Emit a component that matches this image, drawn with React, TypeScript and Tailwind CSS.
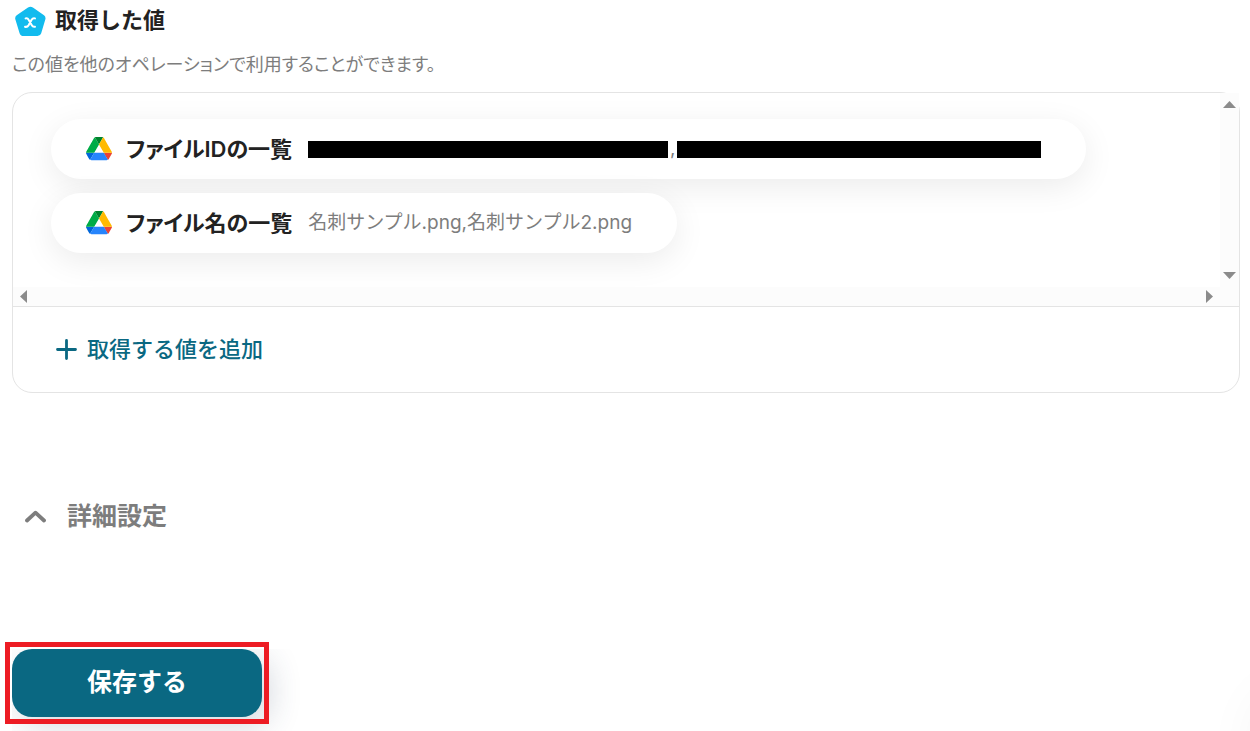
import type { ReactNode } from 'react'

const DriveIcon = () => (
  <svg viewBox="0 0 87.3 78" className="w-[26px] shrink-0" aria-hidden="true">
    <path d="m6.6 66.85 3.85 6.65c.8 1.4 1.95 2.5 3.3 3.3l13.75-23.8h-27.5c0 1.55.4 3.1 1.2 4.5z" fill="#0066da" />
    <path d="m43.65 25-13.75-23.8c-1.35.8-2.5 1.9-3.3 3.3l-25.4 44a9.06 9.06 0 0 0-1.2 4.5h27.5z" fill="#00ac47" />
    <path d="m73.55 76.8c1.35-.8 2.5-1.9 3.3-3.3l1.6-2.75 7.65-13.25c.8-1.4 1.2-2.95 1.2-4.5h-27.502l5.852 11.5z" fill="#ea4335" />
    <path d="m43.65 25 13.75-23.8c-1.35-.8-2.9-1.2-4.5-1.2h-18.5c-1.6 0-3.15.45-4.5 1.2z" fill="#00832d" />
    <path d="m59.8 53h-32.3l-13.75 23.8c1.35.8 2.9 1.2 4.5 1.2h50.8c1.6 0 3.15-.45 4.5-1.2z" fill="#2684fc" />
    <path d="m73.4 26.5-12.7-22c-.8-1.4-1.95-2.5-3.3-3.3l-13.75 23.8 16.15 28h27.45c0-1.55-.4-3.1-1.2-4.5z" fill="#ffba00" />
  </svg>
)

const ValueIcon = () => (
  <svg viewBox="0 0 32 32" className="size-8 shrink-0" aria-hidden="true">
    <path
      d="M13 3.6 Q15.4 1.9 17.9 3.6 L29 11.3 Q31.1 12.9 30.3 15.5 L26.2 29.2 Q25.3 32 22.5 32 H8.3 Q5.5 32 4.6 29.2 L.4 15.5 Q-.4 12.9 1.7 11.3 Z"
      fill="#12bbee"
    />
    <path
      d="M10.6 14.4 Q12.6 13.8 13.6 15.7 L16.8 21.3 Q17.9 23.3 20 22.7 M20 14.4 Q17.8 13.8 16.6 15.8 L13.7 21.1 Q12.2 23.4 10 22.7"
      fill="none"
      stroke="#fff"
      strokeWidth="2"
      strokeLinecap="round"
    />
  </svg>
)

const ValueChip = ({ label, children }: { label: string; children: ReactNode }) => (
  <li className="flex h-[60px] items-center whitespace-nowrap rounded-full bg-white pr-[45px] pl-[35px] shadow-[0_8px_32px_rgba(0,0,0,0.08)]">
    <DriveIcon />
    <span className="ml-[14px] text-[22px] leading-8 font-semibold text-[#222] [font-feature-settings:'palt']">{label}</span>
    <span className="ml-4 flex items-center text-[19px] leading-7 text-[#7d7d7d]">{children}</span>
  </li>
)

const ScrollArrow = ({ label, points, className }: { label: string; points: string; className: string }) => (
  <button type="button" aria-label={label} className="block">
    <svg viewBox="0 0 14 14" className={className} preserveAspectRatio="none" aria-hidden="true">
      <polygon points={points} fill="#8b8b8b" />
    </svg>
  </button>
)

const App = () => {
  return (
    <main className="relative min-h-screen overflow-hidden bg-white pr-[10px] pl-3 font-['Inter','Noto_Sans_CJK_JP',sans-serif]">
      <header className="pt-1">
        <div className="flex items-center gap-2 pl-[3px]">
          <ValueIcon />
          <h1 className="text-[22px] leading-8 font-semibold text-[#222]">取得した値</h1>
        </div>
        <p className="mt-[17px] text-[18px] leading-6 text-[#7d7d7d] [font-feature-settings:'palt']">
          この値を他のオペレーションで利用することができます。
        </p>
      </header>

      <section className="mt-[15px] rounded-[20px] border border-[#e4e4e4]">
        <div className="border-b border-[#e4e4e4]">
          <div className="flex">
            <ul className="flex min-w-0 flex-1 flex-col items-start gap-[14px] overflow-hidden rounded-tl-[20px] pt-[26px] pb-[34px] pl-[38px]">
              <ValueChip label="ファイルIDの一覧">
                <span className="h-[17px] w-[360px] bg-black" />
                <span className="w-[9px] text-center">,</span>
                <span className="h-[17px] w-[364px] bg-black" />
              </ValueChip>
              <ValueChip label="ファイル名の一覧">名刺サンプル.png,名刺サンプル2.png</ValueChip>
            </ul>
            <div className="flex w-[19px] flex-col items-center justify-between bg-[#fcfcfc] py-2">
              <ScrollArrow label="上へスクロール" points="7,0 14,14 0,14" className="h-[7px] w-[13px]" />
              <ScrollArrow label="下へスクロール" points="0,0 14,0 7,14" className="h-[7px] w-[13px]" />
            </div>
          </div>
          <div className="flex h-[19px] items-center justify-between bg-[#fcfcfc] pr-[26px] pl-[7px]">
            <ScrollArrow label="左へスクロール" points="14,0 14,14 0,7" className="h-[13px] w-[7px]" />
            <ScrollArrow label="右へスクロール" points="0,0 14,7 0,14" className="h-[13px] w-[7px]" />
          </div>
        </div>
        <div className="px-[42px] py-[26px]">
          <button type="button" className="flex items-center gap-[10px] text-[22px] leading-[33px] font-medium text-[#0a6882]">
            <svg viewBox="0 0 22 22" className="size-[22px]" aria-hidden="true">
              <path d="M11.5 1.5v18M2.5 10.5h18" stroke="currentColor" strokeWidth="2.8" strokeLinecap="round" />
            </svg>
            取得する値を追加
          </button>
        </div>
      </section>

      <button type="button" className="mt-[105px] ml-3 flex items-center gap-[21px] text-[25px] leading-9 font-semibold text-[#7d7d7d]">
        <svg viewBox="0 0 22 22" className="size-[22px]" aria-hidden="true">
          <path d="M3 15.5l8.5-7.8 8.5 7.8" fill="none" stroke="currentColor" strokeWidth="3.8" strokeLinecap="round" strokeLinejoin="round" />
        </svg>
        詳細設定
      </button>

      <div className="relative mt-[115px] w-[250px]">
        <div className="-mr-12 overflow-hidden pr-12 pb-[14px]">
          <button type="button" className="h-[68px] w-full rounded-[20px] bg-[#0a6882] text-[25px] font-bold text-white shadow-[8px_8px_32px_rgba(40,60,90,0.2)]">
            保存する
          </button>
        </div>
        <div className="pointer-events-none absolute -top-[7px] -right-[7px] -left-[7px] h-[82px] border-5 border-[#ed1c24]" />
      </div>

      <div className="pointer-events-none absolute -right-[106px] -bottom-[60px] size-[100px] rounded-full shadow-[0_0_60px_rgba(0,0,0,0.06)]" />
    </main>
  )
}

export default App
